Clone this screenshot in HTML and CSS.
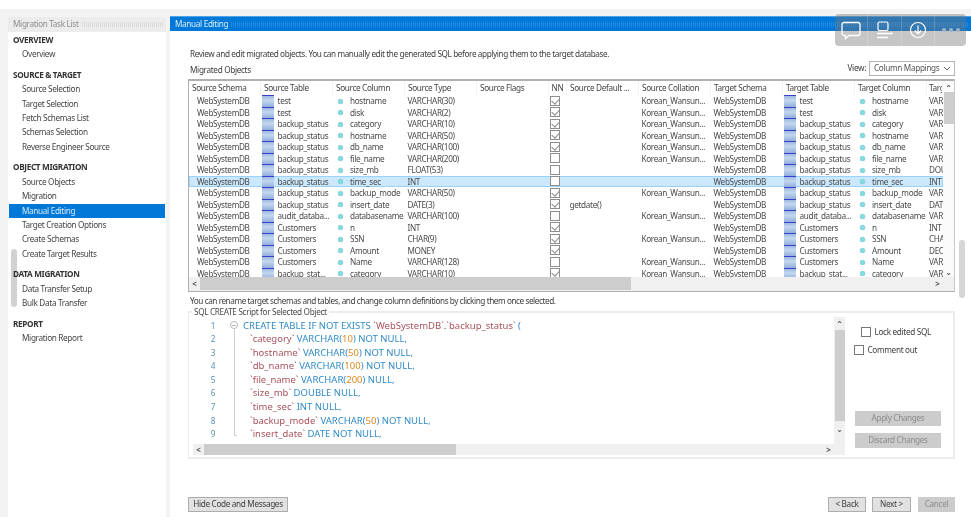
FILE: index.html
```html
<!DOCTYPE html>
<html lang="en">
<head>
<meta charset="utf-8">
<title>Manual Editing</title>
<link rel="stylesheet" href="styles.css">
</head>
<body>
<div class="app">
  <aside class="side">
    <div class="side-title"><span>Migration Task List</span><i class="dots"></i></div>
    <nav class="nav">
      <h4>OVERVIEW</h4>
      <a>Overview</a>
      <h4>SOURCE &amp; TARGET</h4>
      <a>Source Selection</a>
      <a>Target Selection</a>
      <a>Fetch Schemas List</a>
      <a>Schemas Selection</a>
      <a>Reverse Engineer Source</a>
      <h4>OBJECT MIGRATION</h4>
      <a>Source Objects</a>
      <a>Migration</a>
      <a class="on">Manual Editing</a>
      <a>Target Creation Options</a>
      <a>Create Schemas</a>
      <a>Create Target Results</a>
      <h4>DATA MIGRATION</h4>
      <a>Data Transfer Setup</a>
      <a>Bulk Data Transfer</a>
      <h4>REPORT</h4>
      <a>Migration Report</a>
    </nav>
    <div class="side-thumb"></div>
  </aside>
  <main class="main">
    <div class="main-title"><span>Manual Editing</span><i class="dots"></i></div>
    <div class="content">
      <p class="intro">Review and edit migrated objects. You can manually edit the generated SQL before applying them to the target database.</p>
      <div class="objects-head">
        <span>Migrated Objects</span>
        <div class="view"><span>View:</span><div class="select"><span>Column Mappings</span><svg width="8" height="5" viewBox="0 0 8 5"><path d="M1 1l3 3 3-3" fill="none" stroke="#666"/></svg></div></div>
      </div>
      <div class="grid-box">
        <div class="grid-view">
          <div class="row head"><b>Source Schema</b><b>Source Table</b><b>Source Column</b><b>Source Type</b><b>Source Flags</b><b class="nn">NN</b><b>Source Default ...</b><b>Source Collation</b><b>Target Schema</b><b>Target Table</b><b>Target Column</b><b class="last">Target Type</b></div>
          <div class="row"><b>WebSystemDB</b><b class="tb">test</b><b class="col">hostname</b><b>VARCHAR(30)</b><b></b><b class="nn"><i class="ck y"></i></b><b></b><b>Korean_Wansun...</b><b>WebSystemDB</b><b class="tb">test</b><b class="col">hostname</b><b class="last">VARCHAR(30)</b></div>
          <div class="row"><b>WebSystemDB</b><b class="tb">test</b><b class="col">disk</b><b>VARCHAR(2)</b><b></b><b class="nn"><i class="ck y"></i></b><b></b><b>Korean_Wansun...</b><b>WebSystemDB</b><b class="tb">test</b><b class="col">disk</b><b class="last">VARCHAR(2)</b></div>
          <div class="row"><b>WebSystemDB</b><b class="tb">backup_status</b><b class="col">category</b><b>VARCHAR(10)</b><b></b><b class="nn"><i class="ck y"></i></b><b></b><b>Korean_Wansun...</b><b>WebSystemDB</b><b class="tb">backup_status</b><b class="col">category</b><b class="last">VARCHAR(10)</b></div>
          <div class="row"><b>WebSystemDB</b><b class="tb">backup_status</b><b class="col">hostname</b><b>VARCHAR(50)</b><b></b><b class="nn"><i class="ck y"></i></b><b></b><b>Korean_Wansun...</b><b>WebSystemDB</b><b class="tb">backup_status</b><b class="col">hostname</b><b class="last">VARCHAR(50)</b></div>
          <div class="row"><b>WebSystemDB</b><b class="tb">backup_status</b><b class="col">db_name</b><b>VARCHAR(100)</b><b></b><b class="nn"><i class="ck y"></i></b><b></b><b>Korean_Wansun...</b><b>WebSystemDB</b><b class="tb">backup_status</b><b class="col">db_name</b><b class="last">VARCHAR(100)</b></div>
          <div class="row"><b>WebSystemDB</b><b class="tb">backup_status</b><b class="col">file_name</b><b>VARCHAR(200)</b><b></b><b class="nn"><i class="ck"></i></b><b></b><b>Korean_Wansun...</b><b>WebSystemDB</b><b class="tb">backup_status</b><b class="col">file_name</b><b class="last">VARCHAR(200)</b></div>
          <div class="row"><b>WebSystemDB</b><b class="tb">backup_status</b><b class="col">size_mb</b><b>FLOAT(53)</b><b></b><b class="nn"><i class="ck"></i></b><b></b><b></b><b>WebSystemDB</b><b class="tb">backup_status</b><b class="col">size_mb</b><b class="last">DOUBLE</b></div>
          <div class="row sel"><b>WebSystemDB</b><b class="tb">backup_status</b><b class="col">time_sec</b><b>INT</b><b></b><b class="nn"><i class="ck"></i></b><b></b><b></b><b>WebSystemDB</b><b class="tb">backup_status</b><b class="col">time_sec</b><b class="last">INT</b></div>
          <div class="row"><b>WebSystemDB</b><b class="tb">backup_status</b><b class="col">backup_mode</b><b>VARCHAR(50)</b><b></b><b class="nn"><i class="ck y"></i></b><b></b><b>Korean_Wansun...</b><b>WebSystemDB</b><b class="tb">backup_status</b><b class="col">backup_mode</b><b class="last">VARCHAR(50)</b></div>
          <div class="row"><b>WebSystemDB</b><b class="tb">backup_status</b><b class="col">insert_date</b><b>DATE(3)</b><b></b><b class="nn"><i class="ck y"></i></b><b>getdate()</b><b></b><b>WebSystemDB</b><b class="tb">backup_status</b><b class="col">insert_date</b><b class="last">DATE</b></div>
          <div class="row"><b>WebSystemDB</b><b class="tb">audit_databa...</b><b class="col">databasename</b><b>VARCHAR(100)</b><b></b><b class="nn"><i class="ck"></i></b><b></b><b>Korean_Wansun...</b><b>WebSystemDB</b><b class="tb">audit_databa...</b><b class="col">databasename</b><b class="last">VARCHAR(100)</b></div>
          <div class="row"><b>WebSystemDB</b><b class="tb">Customers</b><b class="col">n</b><b>INT</b><b></b><b class="nn"><i class="ck y"></i></b><b></b><b></b><b>WebSystemDB</b><b class="tb">Customers</b><b class="col">n</b><b class="last">INT</b></div>
          <div class="row"><b>WebSystemDB</b><b class="tb">Customers</b><b class="col">SSN</b><b>CHAR(9)</b><b></b><b class="nn"><i class="ck y"></i></b><b></b><b>Korean_Wansun...</b><b>WebSystemDB</b><b class="tb">Customers</b><b class="col">SSN</b><b class="last">CHAR(9)</b></div>
          <div class="row"><b>WebSystemDB</b><b class="tb">Customers</b><b class="col">Amount</b><b>MONEY</b><b></b><b class="nn"><i class="ck y"></i></b><b></b><b></b><b>WebSystemDB</b><b class="tb">Customers</b><b class="col">Amount</b><b class="last">DECIMAL</b></div>
          <div class="row"><b>WebSystemDB</b><b class="tb">Customers</b><b class="col">Name</b><b>VARCHAR(128)</b><b></b><b class="nn"><i class="ck"></i></b><b></b><b>Korean_Wansun...</b><b>WebSystemDB</b><b class="tb">Customers</b><b class="col">Name</b><b class="last">VARCHAR(128)</b></div>
          <div class="row"><b>WebSystemDB</b><b class="tb">backup_stat...</b><b class="col">category</b><b>VARCHAR(10)</b><b></b><b class="nn"><i class="ck y"></i></b><b></b><b>Korean_Wansun...</b><b>WebSystemDB</b><b class="tb">backup_stat...</b><b class="col">category</b><b class="last">VARCHAR(10)</b></div>
          <div class="row part"><b></b><b class="tb"></b><b></b><b></b><b></b><b class="nn"><i class="ck y"></i></b></div>
        </div>
        <div class="vbar grid-v"><span class="arr">&#8963;</span><i class="vthumb"></i><span class="arr dn">&#8964;</span></div>
        <div class="hbar grid-h"><span class="arr">&lt;</span><i class="hthumb"></i><span class="arr">&gt;</span></div>
      </div>
      <p class="hint">You can rename target schemas and tables, and change column definitions by clicking them once selected.</p>
      <fieldset class="sql">
        <legend>SQL CREATE Script for Selected Object</legend>
        <div class="sql-inner">
          <div class="editor">
            <div class="code">
              <div class="gutter">
                <span>1</span><span>2</span><span>3</span><span>4</span><span>5</span><span>6</span><span>7</span><span>8</span><span>9</span>
              </div>
              <div class="fold"><i class="fold-mark"></i><i class="fold-line"></i></div>
              <pre class="lines"><span><k>CREATE TABLE IF NOT EXISTS</k> <r>`WebSystemDB`</r>.<r>`backup_status`</r> <k>(</k></span><span class="in"><r>`category`</r> <k>VARCHAR(</k><n>10</n><k>) NOT NULL,</k></span><span class="in"><r>`hostname`</r> <k>VARCHAR(</k><n>50</n><k>) NOT NULL,</k></span><span class="in"><r>`db_name`</r> <k>VARCHAR(</k><n>100</n><k>) NOT NULL,</k></span><span class="in"><r>`file_name`</r> <k>VARCHAR(</k><n>200</n><k>) NULL,</k></span><span class="in"><r>`size_mb`</r> <k>DOUBLE NULL,</k></span><span class="in"><r>`time_sec`</r> <k>INT NULL,</k></span><span class="in"><r>`backup_mode`</r> <k>VARCHAR(</k><n>50</n><k>) NOT NULL,</k></span><span class="in"><r>`insert_date`</r> <k>DATE NOT NULL,</k></span></pre>
              <div class="vbar sql-v"><span class="arr">&#8963;</span><i class="vthumb"></i><span class="arr dn">&#8964;</span></div>
            </div>
            <div class="hbar sql-h"><span class="arr">&lt;</span><i class="hthumb"></i><span class="arr">&gt;</span></div>
          </div>
          <div class="tools">
            <label class="opt lock"><i class="box"></i>Lock edited SQL</label>
            <label class="opt"><i class="box"></i>Comment out</label>
            <div class="tool-btns">
              <button class="btn off wide">Apply Changes</button>
              <button class="btn off wide">Discard Changes</button>
            </div>
          </div>
        </div>
      </fieldset>
      <div class="footer">
        <button class="btn hide">Hide Code and Messages</button>
        <div class="nav-btns">
          <button class="btn back">&lt; Back</button>
          <button class="btn next">Next &gt;</button>
          <button class="btn off cancel">Cancel</button>
        </div>
      </div>
    </div>
  </main>
  <div class="page-thumb"></div>
  <div class="float">
    <div class="float-cell a"><svg width="20" height="19" viewBox="0 0 20 19"><path d="M3 1.500h14a2 2 0 0 1 2 2v9a2 2 0 0 1-2 2H8l-3.500 3v-3H3a2 2 0 0 1-2-2v-9a2 2 0 0 1 2-2z" fill="none" stroke="#fff" stroke-width="1.300"/></svg></div>
    <div class="float-cell b"><svg width="18" height="19" viewBox="0 0 18 19"><rect x="2" y="1" width="10" height="8.500" rx="1.500" fill="none" stroke="#fff" stroke-width="1.200"/><path d="M1 12.500h16M1 16.500h11" stroke="#fff" stroke-width="1.300"/></svg></div>
    <div class="float-cell a"><svg width="18" height="18" viewBox="0 0 18 18"><circle cx="9" cy="9" r="7.500" fill="none" stroke="#fff" stroke-width="1.200"/><path d="M9 4.500v8M5.800 9.500L9 12.700l3.200-3.200" fill="none" stroke="#fff" stroke-width="1.200"/></svg></div>
    <div class="float-cell c"><svg width="20" height="6" viewBox="0 0 20 6"><circle cx="3" cy="3" r="2" fill="#9fb4c6"/><circle cx="10" cy="3" r="2" fill="#9fb4c6"/><circle cx="17" cy="3" r="2" fill="#9fb4c6"/></svg></div>
  </div>
</div>
</body>
</html>
```
FILE: styles.css
```css
* { box-sizing: border-box; }
html, body { margin: 0; height: 100%; background: #fff; overflow: hidden; }
body { font: 8.2px/1 "Noto Sans", "DejaVu Sans", sans-serif; letter-spacing: -.33px; color: #3c3c3c; }
.app { position: relative; width: 971px; height: 517px; padding: 16px 0 0 5px; display: flex; filter: blur(.35px); background: linear-gradient(#fff 9px, #f3f3f3 9px) no-repeat; }
.side { position: relative; width: 165px; padding: 8px 4px 0 3px; background: #f3f3f3; flex: none; margin-top: -7px; display: flex; flex-direction: column; }
.side-title, .main-title { height: 15px; display: flex; align-items: center; gap: 3px; padding-left: 5px; flex: none; }
.side-title { background: #ececec; color: #8e8e8e; }
.main-title { background: #0078d7; color: #dceefc; border-top: 1px solid #4da3e6; }
.dots { flex: 1; height: 5px; margin-right: 3px; background: repeating-linear-gradient(90deg, #dcdcdc 0 1px, transparent 1px 2px); }
.main-title .dots { background: repeating-linear-gradient(90deg, #1f8ae0 0 1px, transparent 1px 2px); }
.nav { background: #fff; flex: 1; padding: 1px 1px 0; }
.nav h4 { margin: 6.150px 0 0; height: 14.4px; line-height: 14.4px; padding-left: 4px; font-size: 8.2px; font-weight: 700; color: #333; }
.nav h4:first-child { margin-top: 0; }
.nav a { display: block; height: 14.4px; line-height: 14.4px; padding-left: 13px; color: #444; }
.nav a.on { background: #0078d7; color: #d5eafb; }
.side-thumb { position: absolute; left: 6px; top: 240px; width: 6px; height: 58px; border-radius: 3px; background: rgba(0,0,0,.18); }
.main { flex: 1; display: flex; flex-direction: column; background: #fff; min-width: 0; }
.content { padding: 17px 16px 0 18px; display: flex; flex-direction: column; flex: 1; }
.intro { margin: 0; height: 11px; line-height: 11px; padding-left: 2px; letter-spacing: -.39px; }
.objects-head { display: flex; justify-content: space-between; align-items: flex-end; height: 20px; }
.objects-head > span { margin-bottom: 5px; padding-left: 2px; }
.view { display: flex; align-items: center; gap: 3px; margin-bottom: 3px; }
.select { width: 86px; height: 15px; border: 1px solid #b4b4b4; display: flex; justify-content: space-between; align-items: center; padding: 0 3px 0 4px; color: #555; white-space: nowrap; }
.grid-box { position: relative; height: 213px; border: 1px solid #b0b0b0; border-top-width: 2px; border-right-color: #c8c8c8; overflow: hidden; }
.grid-view { height: 197px; margin-right: 11px; overflow: hidden; }
.row { display: grid; grid-template-columns: 72px 72px 72px 72px 72px 18px 72px 72px 72px 72px 72px 16px; height: 11.53px; line-height: 11.53px; color: #4a4a4a; }
.row > b { display: block; font-weight: 400; padding-left: 2.500px; white-space: nowrap; overflow: hidden; position: relative; }
.row > b:first-child { padding-left: 8px; }
.row.head { height: 14px; line-height: 14px; color: #444; }
.row.head > b, .row.head > b:first-child { padding-left: 3px; border-right: 1px solid #f2f2f2; }
.row.part { overflow: hidden; height: 4px; }
.row.sel { background: #cce8ff; box-shadow: inset 0 0 0 1px #99d1ff; }
.row > b.tb { padding-left: 16.500px; }
.row > b.tb::before { content: ""; position: absolute; left: 1px; top: 0; width: 12px; height: 100%; background: linear-gradient(#3a3fd0 0 1px, #9db9e0 1px, #c4d7ef 45%, #92afdc 100%); }
.row > b.col { padding-left: 17px; }
.row > b.col::before { content: ""; position: absolute; left: 5px; top: 3.500px; width: 5px; height: 5px; border-radius: 50%; background: radial-gradient(#8fe6ea, #62c3cc); box-shadow: 0 0 1px #b0b0b0; }
.row > b.nn { padding-left: 0; text-align: center; overflow: visible; }
.row.head > b.nn { padding-left: 0; }
.row > b.last { padding-left: 2px; }
.ck { display: block; position: relative; width: 10px; height: 10px; margin: .5px auto 0 1px; border: 1px solid #8e8e8e; background: #fff; }
.ck.y::after { content: ""; position: absolute; left: 1.500px; top: 0; width: 4px; height: 6px; border: solid #8a8a8a; border-width: 0 1px 1px 0; transform: rotate(42deg); }
.vbar, .hbar { position: absolute; background: #f0f0f0; display: flex; align-items: center; }
.vbar { flex-direction: column; width: 11px; }
.hbar { height: 11px; }
.arr { color: #555; flex: none; font-size: 8px; letter-spacing: 0; line-height: 11px; text-align: center; width: 11px; height: 11px; font-weight: 700; }
.vbar .arr { line-height: 14px; }
.vbar .arr.dn { line-height: 6px; }
.vthumb, .hthumb { display: block; background: #cdcdcd; }
.grid-v { top: 0; right: 0; height: 199px; background: #fafafa; }
.grid-v .vthumb { width: 10px; height: 32px; margin-bottom: auto; }
.grid-h { left: 0; right: 0; bottom: 0; height: 14px; padding: 0 11px 1px 0; }
.grid-h .hthumb { width: 431px; height: 100%; margin-right: auto; }
.hint { margin: 3px 0 0; height: 11px; line-height: 11px; padding-left: 2px; letter-spacing: -.43px; }
.sql { margin: 1px 0 0; padding: 0; height: 152px; border: 1px solid #ececec; border-width: 2px 2px 2px 1px; position: relative; min-width: 0; }
.sql legend { padding: 0 2px; margin-left: 3px; height: 10px; line-height: 10px; font-size: 8.2px; color: #4a4a4a; }
.sql-inner { display: flex; height: 142px; padding: 0 14px 0 4px; }
.editor { width: 652px; position: relative; flex: none; }
.code { display: flex; height: 128px; position: relative; }
.gutter { width: 22px; display: flex; flex-direction: column; text-align: right; color: #5b8fb5; flex: none; margin-top: 1.500px; }
.gutter span { height: 13.6px; line-height: 13.6px; }
.fold { width: 28px; position: relative; flex: none; }
.fold-mark { position: absolute; left: 15px; top: 4px; width: 8px; height: 8px; border-radius: 50%; border: 1px solid #b8b8b8; background: linear-gradient(#b8b8b8,#b8b8b8) center/4px 1px no-repeat #fff; }
.fold-line { position: absolute; left: 19px; top: 12px; width: 3px; height: 107px; border: solid #cfcfcf; border-width: 0 0 1px 1px; }
.lines { margin: 1.500px 0 0; font: 9.5px/13.6px "Noto Sans", sans-serif; letter-spacing: 0; color: #444; }
.lines span { display: block; height: 13.6px; }
.lines .in { padding-left: 7px; }
k { color: #2f8ac7; }
r { color: #a9525c; }
n { color: #d98a1f; }
.sql-v { right: 0; top: 0; height: 138px; }
.sql-v .vthumb { width: 10px; height: 91px; margin-top: 2px; flex: none; }
.sql-v .arr.dn { margin-top: 5px; }
.sql-h { left: 0; right: 11px; top: 127px; }
.sql-h .hthumb { width: 252px; height: 100%; margin-right: auto; }
.tools { flex: 1; display: flex; flex-direction: column; padding-left: 9px; white-space: nowrap; }
.opt { display: flex; align-items: center; gap: 3.500px; height: 10px; color: #3c3c3c; }
.opt.lock { margin: 10px 0 0 7px; }
.opt + .opt { margin-top: 8px; }
.box { width: 10px; height: 10px; border: 1px solid #777; display: block; background: #fff; flex: none; }
.tool-btns { margin-top: auto; display: flex; flex-direction: column; gap: 7px; padding: 0 0 11.500px 1px; }
.btn { font: 8.2px/1 "Noto Sans", sans-serif; letter-spacing: -.33px; color: #3c3c3c; background: #e1e1e1; border: 1px solid #adadad; height: 15px; padding: 0; white-space: nowrap; }
.btn.off { background: #cccccc; border-color: #cccccc; color: #8c8c8c; }
.btn.wide { width: 86px; }
.footer { display: flex; justify-content: space-between; margin-top: 37.500px; }
.hide { width: 100px; }
.nav-btns { display: flex; gap: 6px; }
.back { width: 38px; }
.next { width: 39px; }
.cancel { width: 37px; margin-left: 1px; }
.page-thumb { position: absolute; left: 959px; top: 240px; width: 6px; height: 58px; border-radius: 3px; background: #d6d6d6; }
.float { position: absolute; left: 835px; top: 14px; width: 131px; height: 32px; background: rgba(120,120,120,.42); border-radius: 4px; display: flex; }
.float-cell { display: flex; align-items: center; justify-content: center; border-right: 1px solid rgba(255,255,255,.18); }
.float-cell.a { width: 33px; }
.float-cell.b { width: 34px; }
.float-cell.c { width: 31px; border-right: 0; }
```
